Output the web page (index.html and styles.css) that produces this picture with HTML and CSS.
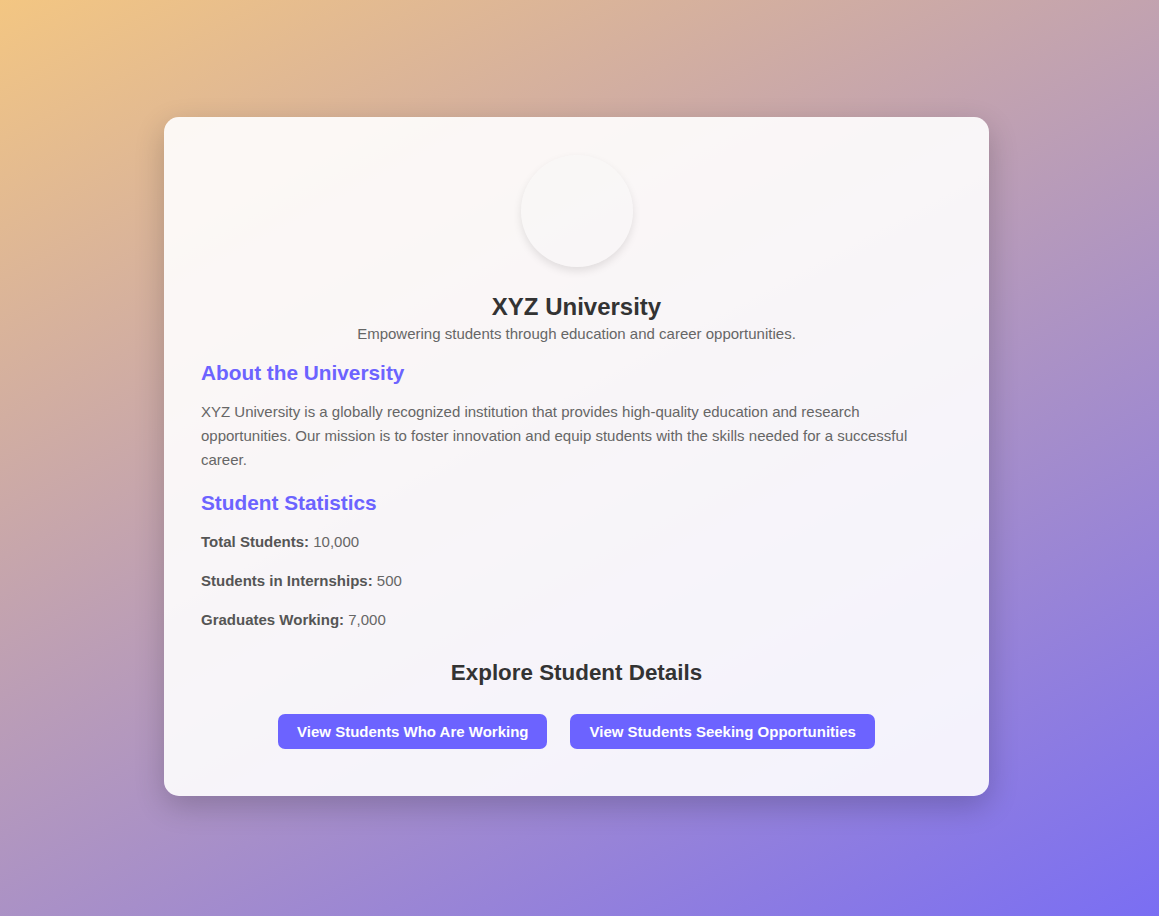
FILE: index.html
```html
<!DOCTYPE html>
<html lang="en">
<head>
<meta charset="utf-8">
<title>XYZ University</title>
<link rel="stylesheet" href="styles.css">
</head>
<body>
<main class="card">
  <div class="logo"></div>
  <h1 class="title">XYZ University</h1>
  <p class="subtitle">Empowering students through education and career opportunities.</p>

  <h2 class="section-title">About the University</h2>
  <p class="text">XYZ University is a globally recognized institution that provides high-quality education and research opportunities. Our mission is to foster innovation and equip students with the skills needed for a successful career.</p>

  <h2 class="section-title">Student Statistics</h2>
  <p class="stat"><strong>Total Students:</strong> 10,000</p>
  <p class="stat"><strong>Students in Internships:</strong> 500</p>
  <p class="stat"><strong>Graduates Working:</strong> 7,000</p>

  <h3 class="explore">Explore Student Details</h3>
  <div class="actions">
    <a class="btn" href="#">View Students Who Are Working</a>
    <a class="btn" href="#">View Students Seeking Opportunities</a>
  </div>
</main>
</body>
</html>
```

FILE: styles.css
```css
html, body {
  margin: 0;
  padding: 0;
  height: 100%;
}
body {
  font-family: "Liberation Sans", Arial, sans-serif;
  background: linear-gradient(152deg, #f3c682 0%, #7a6ef3 100%);
  display: flex;
  justify-content: center;
  align-items: flex-start;
  min-height: 916px;
  padding-right: 6px;
  box-sizing: border-box;
}
.card {
  box-sizing: border-box;
  width: 825px;
  margin-top: 117px;
  padding: 38px 37px 47px;
  background: rgba(255, 255, 255, 0.9);
  border-radius: 15px;
  box-shadow: 0 10px 30px rgba(0, 0, 0, 0.2);
  text-align: left;
}
.logo {
  width: 112px;
  height: 112px;
  border-radius: 50%;
  margin: 0 auto;
  background: rgba(248, 248, 248, 0.4);
  box-shadow: 0 4px 9px rgba(0, 0, 0, 0.1);
}
.title {
  margin: 26px 0 0;
  text-align: center;
  font-size: 24px;
  line-height: 28px;
  color: #333;
}
.subtitle {
  margin: 4px 0 0;
  text-align: center;
  font-size: 15px;
  line-height: 18px;
  color: #666;
}
.section-title {
  margin: 18px 0 0;
  font-size: 20.8px;
  line-height: 24px;
  color: #6c63ff;
}
.text {
  margin: 15px 0 0;
  font-size: 15px;
  line-height: 24px;
  color: #666;
}
.text + .section-title {
  margin-top: 19px;
}
.stat {
  margin: 15px 0 0;
  font-size: 15px;
  line-height: 24px;
  color: #666;
}
.stat strong {
  color: #555;
}
.explore {
  margin: 28px 0 0;
  text-align: center;
  font-size: 22.4px;
  line-height: 26px;
  color: #333;
}
.actions {
  display: flex;
  justify-content: center;
  gap: 23px;
  margin-top: 28px;
}
.btn {
  display: inline-block;
  padding: 0 19px;
  height: 35px;
  line-height: 35px;
  background: #6c63ff;
  color: #fff;
  font-size: 15px;
  font-weight: bold;
  text-decoration: none;
  border-radius: 7px;
}
```
